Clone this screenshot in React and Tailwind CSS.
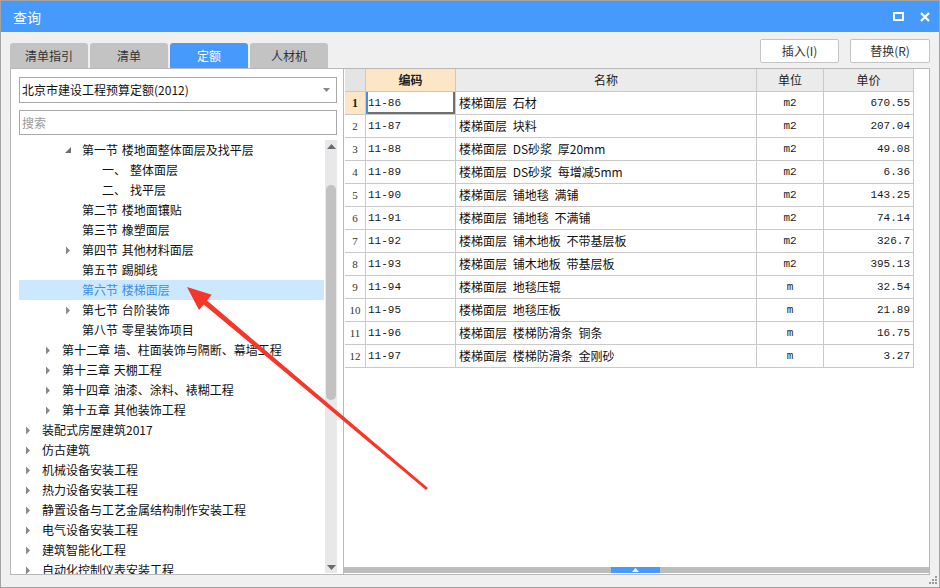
import React from 'react';

const tree = [
    { lvl: 2, arrow: 'open', text: '第一节 楼地面整体面层及找平层' },
    { lvl: 3, text: '一、', text2: '整体面层' },
    { lvl: 3, text: '二、', text2: '找平层' },
    { lvl: 2, text: '第二节 楼地面镶贴' },
    { lvl: 2, text: '第三节 橡塑面层' },
    { lvl: 2, arrow: 'closed', text: '第四节 其他材料面层' },
    { lvl: 2, text: '第五节 踢脚线' },
    { lvl: 2, text: '第六节 楼梯面层', selected: true },
    { lvl: 2, arrow: 'closed', text: '第七节 台阶装饰' },
    { lvl: 2, text: '第八节 零星装饰项目' },
    { lvl: 1, arrow: 'closed', text: '第十二章 墙、柱面装饰与隔断、幕墙工程' },
    { lvl: 1, arrow: 'closed', text: '第十三章 天棚工程' },
    { lvl: 1, arrow: 'closed', text: '第十四章 油漆、涂料、裱糊工程' },
    { lvl: 1, arrow: 'closed', text: '第十五章 其他装饰工程' },
    { lvl: 0, arrow: 'closed', text: '装配式房屋建筑2017' },
    { lvl: 0, arrow: 'closed', text: '仿古建筑' },
    { lvl: 0, arrow: 'closed', text: '机械设备安装工程' },
    { lvl: 0, arrow: 'closed', text: '热力设备安装工程' },
    { lvl: 0, arrow: 'closed', text: '静置设备与工艺金属结构制作安装工程' },
    { lvl: 0, arrow: 'closed', text: '电气设备安装工程' },
    { lvl: 0, arrow: 'closed', text: '建筑智能化工程' },
    { lvl: 0, arrow: 'closed', text: '自动化控制仪表安装工程' },
];

const indent = ['pl-[3px]', 'pl-[23px]', 'pl-[43px]', 'pl-[63px]'];

const rows = [
    ['11-86', '楼梯面层 石材', 'm2', '670.55'],
    ['11-87', '楼梯面层 块料', 'm2', '207.04'],
    ['11-88', '楼梯面层 DS砂浆 厚20mm', 'm2', '49.08'],
    ['11-89', '楼梯面层 DS砂浆 每增减5mm', 'm2', '6.36'],
    ['11-90', '楼梯面层 铺地毯 满铺', 'm2', '143.25'],
    ['11-91', '楼梯面层 铺地毯 不满铺', 'm2', '74.14'],
    ['11-92', '楼梯面层 铺木地板 不带基层板', 'm2', '326.7'],
    ['11-93', '楼梯面层 铺木地板 带基层板', 'm2', '395.13'],
    ['11-94', '楼梯面层 地毯压辊', 'm', '32.54'],
    ['11-95', '楼梯面层 地毯压板', 'm', '21.89'],
    ['11-96', '楼梯面层 楼梯防滑条 铜条', 'm', '16.75'],
    ['11-97', '楼梯面层 楼梯防滑条 金刚砂', 'm', '3.27'],
];

const tabs = ['清单指引', '清单', '定额', '人材机'];

const Arrow = ({ kind }) => {
    if (kind === 'open') {
        return (
            <svg width="8" height="8" viewBox="0 0 8 8">
                <polygon points="7,1 7,7 1,7" fill="#6f6f6f" />
            </svg>
        );
    }
    if (kind === 'closed') {
        return (
            <svg width="6" height="9" viewBox="0 0 6 9">
                <polygon points="1,0.5 5,4.5 1,8.5" fill="#8a8a8a" />
            </svg>
        );
    }
    return null;
};

const cell = 'border-r border-b border-[#c9c9c9] h-[23px] flex items-center';
const mono = "font-['Liberation_Mono','Noto_Sans_CJK_SC',monospace] text-[11px] text-[#1a1a1a]";

export default function App() {
    return (
        <div className="relative w-[940px] h-[588px] overflow-hidden border border-[#a3a3a3] bg-[#f0f0f0] flex flex-col font-['Noto_Sans_CJK_SC','Liberation_Sans',sans-serif] text-[#222]">
            {/* title bar */}
            <div className="h-[31px] shrink-0 bg-[#459afc] flex items-center pl-[12px] pr-[9px]">
                <span className="text-white text-[14px] leading-none">查询</span>
                <div className="ml-auto flex items-center gap-[16px]">
                    <svg width="11" height="9" viewBox="0 0 11 9">
                        <rect x="1" y="1" width="9" height="7" fill="none" stroke="#fff" strokeWidth="2" />
                    </svg>
                    <svg width="10" height="10" viewBox="0 0 10 10">
                        <path d="M1 1 L9 9 M9 1 L1 9" stroke="#fff" strokeWidth="2.2" />
                    </svg>
                </div>
            </div>

            {/* tabs + buttons */}
            <div className="h-[36px] shrink-0 flex items-end pl-[9px] pr-[9px]">
                <div className="flex gap-[2px]">
                    {tabs.map((t, i) => (
                        <div
                            key={t}
                            className={`w-[78px] h-[25px] rounded-t-[3px] flex items-center justify-center text-[12px] ${i === 2 ? 'bg-[#459afc] text-white' : 'bg-[#c3c3c3] text-[#333]'}`}
                        >
                            {t}
                        </div>
                    ))}
                </div>
                <div className="ml-auto self-start mt-[7px] flex gap-[11px]">
                    <button className="w-[79px] h-[24px] bg-white border border-[#c4c4c4] rounded-[2px] text-[12px] text-[#333]">插入(I)</button>
                    <button className="w-[80px] h-[24px] bg-white border border-[#c4c4c4] rounded-[2px] text-[12px] text-[#333]">替换(R)</button>
                </div>
            </div>

            {/* main */}
            <div className="h-[507px] shrink-0 flex pl-[9px]">
                {/* left panel */}
                <div className="w-[334px] bg-white border border-[#b9b9b9] flex flex-col">
                    <div className="mt-[8px] ml-[8px] w-[318px] h-[26px] border border-[#a9a9a9] flex items-center pl-[2px] pr-[6px] text-[12px] text-[#111]">
                        <span>北京市建设工程预算定额(2012)</span>
                        <svg className="ml-auto" width="7" height="4" viewBox="0 0 7 4">
                            <polygon points="0,0 7,0 3.5,4" fill="#888" />
                        </svg>
                    </div>
                    <div className="mt-[7px] ml-[8px] w-[318px] h-[25px] border border-[#a9a9a9] flex items-center pl-[2px] text-[12px] text-[#9a9a9a]">
                        搜索
                    </div>
                    <div className="mt-[5px] flex flex-1 min-h-0">
                        <div className="ml-[8px] w-[305px] overflow-hidden text-[12px] [word-spacing:1px]">
                            {tree.map((n, i) => (
                                <div
                                    key={i}
                                    className={`h-[20px] flex items-center whitespace-nowrap ${indent[n.lvl]} ${n.selected ? 'bg-[#cce8ff] text-[#3a8ee8]' : 'text-[#111]'}`}
                                >
                                    <span className="w-[12px] flex justify-center">
                                        <Arrow kind={n.arrow} />
                                    </span>
                                    <span className="ml-[8px] -mt-[1px]">{n.text}</span>
                                    {n.text2 && <span className="ml-[4px] -mt-[1px]">{n.text2}</span>}
                                </div>
                            ))}
                        </div>
                        <div className="ml-[1px] w-[12px] bg-[#e8e8e8] flex flex-col items-center mb-[1px]">
                            <div className="h-[12px] flex items-center">
                                <svg width="9" height="5" viewBox="0 0 9 5">
                                    <polygon points="0,5 9,5 4.5,0" fill="#6a6a74" />
                                </svg>
                            </div>
                            <div className="mt-[33px] w-[10px] h-[215px] rounded-full bg-[#c2c2c2]" />
                            <div className="flex-1" />
                            <div className="h-[12px] flex items-center">
                                <svg width="9" height="5" viewBox="0 0 9 5">
                                    <polygon points="0,0 9,0 4.5,5" fill="#6a6a74" />
                                </svg>
                            </div>
                        </div>
                    </div>
                </div>

                {/* right panel */}
                <div className="w-[586px] bg-white border border-[#b9b9b9] border-l-0 flex flex-col">
                    <div className="grid grid-cols-[21px_90px_301px_67px_90px] w-[569px] ml-[1px]">
                        <div className={`${cell} bg-[#e4e4e4]`} />
                        <div className={`${cell} justify-center bg-[#fde6c6] text-[12px] font-bold`}>编码</div>
                        <div className={`${cell} justify-center bg-[#ebebeb] text-[12px]`}>名称</div>
                        <div className={`${cell} justify-center bg-[#ebebeb] text-[12px]`}>单位</div>
                        <div className={`${cell} justify-center bg-[#ebebeb] text-[12px]`}>单价</div>
                        {rows.map((r, i) => (
                            <React.Fragment key={r[0]}>
                                <div className={`${cell} justify-center text-[11px] font-['Liberation_Serif',serif] ${i === 0 ? 'bg-[#fde6c6] font-bold text-[12px]' : 'text-[#333]'}`}>
                                    {i + 1}
                                </div>
                                <div className={`${cell} ${mono} pl-[2px] ${i === 0 ? 'shadow-[inset_2px_0_0_#3d8ef8,inset_-2px_-2px_0_#707070]' : ''}`}>
                                    {r[0]}
                                </div>
                                <div className={`${cell} pl-[3px] text-[12px] text-[#111] whitespace-pre [word-spacing:3px]`}>{r[1]}</div>
                                <div className={`${cell} ${mono} justify-center`}>{r[2]}</div>
                                <div className={`${cell} ${mono} justify-end pr-[3px]`}>{r[3]}</div>
                            </React.Fragment>
                        ))}
                    </div>
                    <div className="flex-1" />
                    <div className="h-[6px] mb-[1px] bg-[#bdbdbd] flex">
                        <div className="ml-[267px] w-[49px] h-[6px] bg-[#459afc] flex items-center justify-center">
                            <svg width="7" height="4" viewBox="0 0 7 4">
                                <polygon points="0,4 7,4 3.5,0" fill="#fff" />
                            </svg>
                        </div>
                    </div>
                </div>
            </div>

            {/* bottom strip */}
            <div className="flex-1 flex justify-end items-start pr-[1px]">
                <svg width="10" height="10" viewBox="0 0 10 10">
                    <rect x="7" y="1" width="2" height="2" fill="#9a9a9a" />
                    <rect x="4" y="4" width="2" height="2" fill="#9a9a9a" />
                    <rect x="7" y="4" width="2" height="2" fill="#9a9a9a" />
                    <rect x="1" y="7" width="2" height="2" fill="#9a9a9a" />
                    <rect x="4" y="7" width="2" height="2" fill="#9a9a9a" />
                    <rect x="7" y="7" width="2" height="2" fill="#9a9a9a" />
                </svg>
            </div>

            {/* red annotation arrow */}
            <svg className="absolute -left-px -top-px pointer-events-none" width="940" height="588" viewBox="0 0 940 588">
                <polygon
                    points="187,287 211.8,294.8 207,300.6 428,487.9 426,490.1 203.8,304.4 199,310.1"
                    fill="#f5372a"
                />
            </svg>
        </div>
    );
}
